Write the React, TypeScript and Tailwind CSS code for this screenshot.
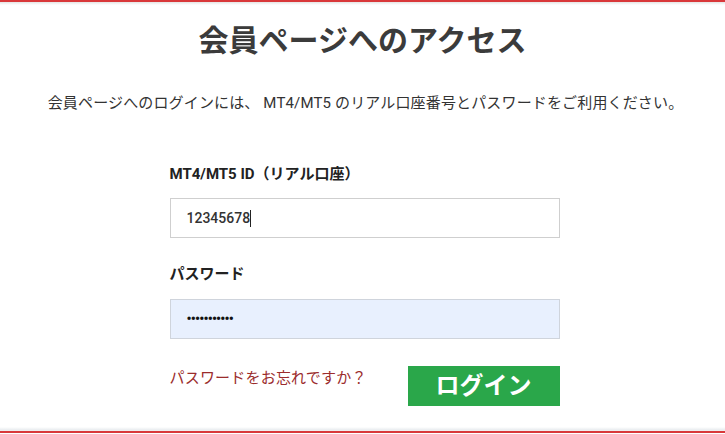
const font = {
  fontFamily: 'Roboto, "Noto Sans CJK JP", sans-serif',
};

export default function App() {
  return (
    <div className="flex h-[434px] w-full flex-col bg-white text-[#333]" style={font}>
      {/* top rule */}
      <div className="h-[2px] bg-[#d9383a]" />
      <div className="h-[3px] bg-gradient-to-b from-[#e4e4e4] to-white" />

      <h1 className="mt-[16px] text-center text-[30px] font-bold leading-[40px] text-[#3b3b3b]">
        会員ページへのアクセス
      </h1>

      <p className="mt-[31px] pl-[6px] text-center text-[15px] leading-[22px] tracking-[0.15px] text-[#333]">
        会員ページへのログインには、 MT4/MT5 のリアル口座番号とパスワードをご利用ください。
      </p>

      <div className="mx-auto mt-[49px] flex w-[394px] flex-col pl-[4px]">
        <label className="text-[15px] font-bold leading-[22px] text-[#222]">
          MT4/MT5 ID（リアル口座）
        </label>
        <div className="mt-[13px] flex h-[40px] items-center border border-[#cfcfcf] bg-white pl-[16px] text-[14px] font-medium text-[#333]">
          <span>12345678</span>
          <span className="h-[17px] w-px bg-[#222]" />
        </div>

        <label className="mt-[25px] text-[15px] font-bold leading-[22px] text-[#222]">
          パスワード
        </label>
        <div className="mt-[14px] flex h-[40px] items-center border border-[#cfd4dc] bg-[#e8f0fe] pl-[16px] text-[14px] font-bold tracking-[-0.8px] text-[#111]">
          •••••••••••
        </div>

        <div className="mt-[27px] flex items-start justify-between">
          <a className="mt-px text-[15px] leading-[22px] tracking-[0.2px] text-[#9b2c2c]">パスワードをお忘れですか？</a>
          <button className="flex h-[40px] w-[152px] items-center justify-center bg-[#2aa74a] text-[24px] font-bold text-white">
            ログイン
          </button>
        </div>
      </div>

      <div className="flex-1" />

      {/* bottom rule */}
      <div className="h-[3px] bg-gradient-to-b from-white to-[#e8ecef]" />
      <div className="h-[1px] bg-[#eeeeee]" />
      <div className="h-[2px] bg-[#d9383a]" />
      <div className="h-px bg-white" />
    </div>
  );
}
